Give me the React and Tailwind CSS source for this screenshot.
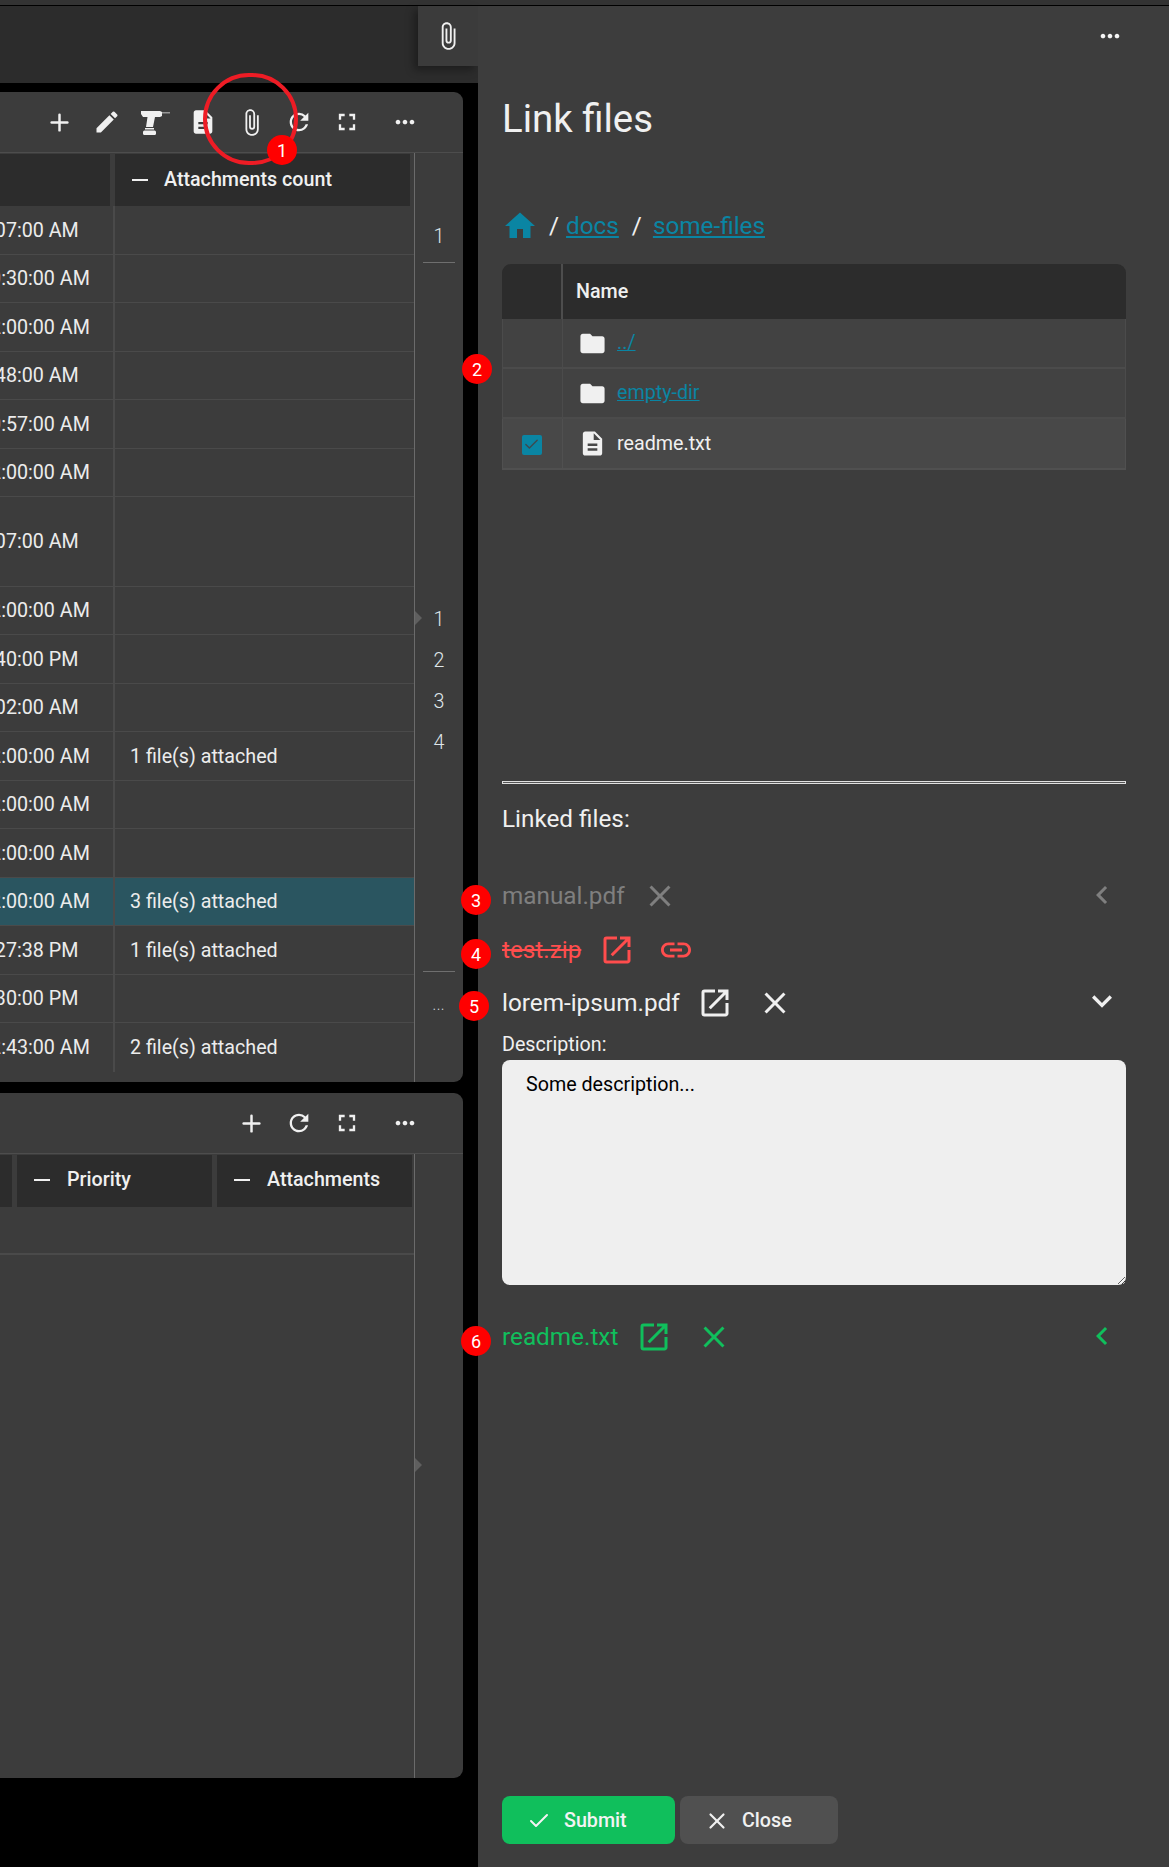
import { Check, Plus, X } from "lucide-react"
import {
  MdAttachFile,
  MdChevronLeft,
  MdClose,
  MdDescription,
  MdEdit,
  MdExpandMore,
  MdFolder,
  MdFullscreen,
  MdHome,
  MdLink,
  MdMoreHoriz,
  MdOpenInNew,
  MdRefresh,
} from "react-icons/md"

const rows = [
  { time: "9:07:00 AM" },
  { time: "10:30:00 AM" },
  { time: "12:00:00 AM" },
  { time: "9:48:00 AM" },
  { time: "10:57:00 AM" },
  { time: "12:00:00 AM" },
  { time: "9:07:00 AM", tall: true },
  { time: "12:00:00 AM" },
  { time: "3:40:00 PM" },
  { time: "9:02:00 AM" },
  { time: "12:00:00 AM", files: "1 file(s) attached" },
  { time: "12:00:00 AM" },
  { time: "12:00:00 AM" },
  { time: "12:00:00 AM", files: "3 file(s) attached", active: true },
  { time: "1:27:38 PM", files: "1 file(s) attached" },
  { time: "4:30:00 PM" },
  { time: "12:43:00 AM", files: "2 file(s) attached" },
]

function DrillIcon() {
  return (
    <svg width="30" height="25" viewBox="0 0 30 25" fill="#f0f0f0">
      <path d="M1 1h19l2 1v4l-2 1h-5l-2 10H6l1.500-10H3L1 4z" />
      <path d="M22 2.500h8v.8h-8z" />
      <rect x="5" y="18" width="9" height="1.500" />
      <rect x="3" y="20.500" width="13" height="4.500" rx="1.500" />
    </svg>
  )
}

function Tool({ children }) {
  return <div className="w-12 h-7 flex items-center justify-center text-[#f0f0f0]">{children}</div>
}

function Toolbar({ children }) {
  return (
    <div className="h-[61px] shrink-0 border-b border-[#4d4d4d] flex items-center justify-end pr-[34px]">
      {children}
      <div className="w-[10px]" />
      <div className="w-[48px] flex justify-center text-[#f0f0f0]">
        <MdMoreHoriz size={28} />
      </div>
    </div>
  )
}

function HeaderCell({ label, className }) {
  return (
    <div className={`h-[52px] bg-[#2c2c2c] flex items-center text-[19.7px] font-medium text-[#f0f0f0] ${className}`}>
      <span className="w-4 h-[2px] bg-[#f0f0f0]" />
      {label}
    </div>
  )
}

function Tick({ className }) {
  return <span className={`absolute left-0 w-0 h-0 border-y-[7px] border-y-transparent border-l-[7px] border-l-[#5f5f5f] ${className}`} />
}

function RailNumber({ children }) {
  return <div className="h-[41px] flex items-center justify-center text-[19.7px] font-light text-[#dfe6ea]">{children}</div>
}

function RecordsPanel() {
  return (
    <div className="h-[990px] shrink-0 bg-[#3c3c3c] rounded-r-[9px] flex flex-col overflow-hidden">
      <Toolbar>
        <Tool><Plus size={27} strokeWidth={2.2} /></Tool>
        <Tool><MdEdit size={28} /></Tool>
        <Tool><DrillIcon /></Tool>
        <Tool><MdDescription size={28} /></Tool>
        <Tool><MdAttachFile size={29} /></Tool>
        <Tool><MdRefresh size={28} /></Tool>
        <Tool><MdFullscreen size={28} /></Tool>
      </Toolbar>
      <div className="flex-1 flex min-h-0">
        <div className="w-[414px] shrink-0 pt-[1px]">
          <div className="flex">
            <HeaderCell label="" className="w-[110px] mr-[5px] [&>span]:hidden" />
            <HeaderCell label="Attachments count" className="w-[295px] pl-[17px] pb-[1px] gap-[16px]" />
          </div>
          {rows.map((row, i) => (
            <div
              key={i}
              className={`flex border-b-[1.5px] border-[#4a4a4a] text-[19.7px] text-[#ececec] last:border-b-0 ${row.tall ? "h-[89.5px]" : "h-[48.5px]"} ${row.active ? "bg-[#2a5560]" : ""}`}
            >
              <div className="w-[115px] shrink-0 border-r-2 border-[#4a4a4a] overflow-hidden flex items-center pt-[2px]">
                <span className="whitespace-nowrap ml-[-21px]">{row.time}</span>
              </div>
              <div className="flex-1 pl-[15px] flex items-center pt-[2px]">{row.files}</div>
            </div>
          ))}
        </div>
        <div className="relative flex-1 border-l border-[#6b6b6b] flex flex-col">
          <div className="h-[63px]" />
          <RailNumber>1</RailNumber>
          <div className="h-[6px] mx-[8px] border-b border-[#6f6f6f]" />
          <div className="h-[336px]" />
          <Tick className="top-[458px]" />
          <RailNumber>1</RailNumber>
          <RailNumber>2</RailNumber>
          <RailNumber>3</RailNumber>
          <RailNumber>4</RailNumber>
          <div className="h-[209px] mx-[8px] border-b border-[#6f6f6f]" />
          <div className="h-[70px] flex items-center justify-center text-[12px] tracking-[1px] text-[#cfd5d8] pb-[2px]">...</div>
        </div>
      </div>
    </div>
  )
}

function SubPanel() {
  return (
    <div className="h-[685px] shrink-0 mt-[11px] bg-[#3c3c3c] rounded-r-[9px] flex flex-col overflow-hidden">
      <Toolbar>
        <Tool><Plus size={27} strokeWidth={2.2} /></Tool>
        <Tool><MdRefresh size={28} /></Tool>
        <Tool><MdFullscreen size={28} /></Tool>
      </Toolbar>
      <div className="flex-1 flex min-h-0">
        <div className="w-[414px] shrink-0 pt-[1px]">
          <div className="flex">
            <div className="w-[12px] h-[52px] bg-[#2c2c2c] mr-[5px]" />
            <HeaderCell label="Priority" className="w-[195px] pl-[17px] mr-[5px] pb-[2px] gap-[17px]" />
            <HeaderCell label="Attachments" className="w-[195px] pl-[17px] pb-[2px] gap-[17px]" />
          </div>
          <div className="h-[48px] border-b-2 border-[#4a4a4a]" />
        </div>
        <div className="relative flex-1 border-l border-[#6b6b6b]">
          <Tick className="top-[304px]" />
        </div>
      </div>
    </div>
  )
}

function FileRow({ name, color, strike, className, children, chevron }) {
  return (
    <div className={`flex items-center ${color} ${className}`}>
      <span className={`text-[24.3px] leading-[30px] ${strike ? "line-through" : ""}`}>{name}</span>
      {children}
      {chevron}
    </div>
  )
}

function LinkFilesPanel() {
  return (
    <div className="flex-1 bg-[#3d3d3d] flex flex-col pl-[24px] pr-[43px] pb-[23px] text-[#f0f0f0]">
      <div className="h-[60px] flex items-center justify-end text-[#f5f5f5] mr-[2px]">
        <MdMoreHoriz size={28} />
      </div>
      <h1 className="text-[38.4px] leading-[44px] mt-[31px] text-[#f0f0f0]">Link files</h1>

      <div className="flex items-center h-[36px] mt-[67px] text-[24.3px] text-[#f0f0f0]">
        <MdHome size={36} className="text-[#0a85a3]" />
        <span className="ml-[11px] mr-[7px]">/</span>
        <a className="text-[#0a85a3] underline">docs</a>
        <span className="ml-[13px] mr-[11px]">/</span>
        <a className="text-[#0a85a3] underline">some-files</a>
      </div>

      <div className="mt-[20px] text-[19.7px]">
        <div className="h-[55px] flex bg-[#2c2c2c] rounded-t-[9px] font-medium">
          <div className="w-[61px] border-r-2 border-[#4d4d4d]" />
          <div className="pl-[13px] flex items-center">Name</div>
        </div>
        <div className="h-[50px] flex bg-[#424242] border-x border-b-2 border-[#4b4b4b]">
          <div className="w-[60px] border-r border-[#4b4b4b]" />
          <div className="pl-[15px] flex items-center gap-[10px]">
            <MdFolder size={29} className="text-[#f0f0f0]" />
            <a className="text-[#0a85a3] underline">../</a>
          </div>
        </div>
        <div className="h-[50px] flex bg-[#424242] border-x border-b-2 border-[#4b4b4b]">
          <div className="w-[60px] border-r border-[#4b4b4b]" />
          <div className="pl-[15px] flex items-center gap-[10px]">
            <MdFolder size={29} className="text-[#f0f0f0]" />
            <a className="text-[#0a85a3] underline">empty-dir</a>
          </div>
        </div>
        <div className="h-[51px] flex bg-[#484848] border-x border-b-2 border-[#505050]">
          <div className="w-[60px] border-r border-[#505050] flex items-center justify-center">
            <div className="w-5 h-5 mt-[2px] -ml-[2px] rounded-[2px] bg-[#0a85a3] flex items-center justify-center">
              <Check size={17} strokeWidth={2} className="text-[#3d4a50]" />
            </div>
          </div>
          <div className="pl-[15px] flex items-center gap-[10px]">
            <MdDescription size={29} className="text-[#f0f0f0]" />
            <span>readme.txt</span>
          </div>
        </div>
      </div>

      <hr className="mt-[311px] h-[3px] border border-[#e0e0e0] bg-[#555555]" />

      <div className="mt-[20px] text-[24.3px] leading-[30px]">Linked files:</div>

      <FileRow
        name="manual.pdf"
        color="text-[#7f7f7f]"
        className="mt-[44px]"
        chevron={<MdChevronLeft size={36} className="ml-auto mr-[6px] -mt-[3px]" />}
      >
        <MdClose size={36} className="ml-[17px]" />
      </FileRow>

      <FileRow name="test.zip" strike color="text-[#ff4d4d]" className="mt-[18px]">
        <MdOpenInNew size={36} className="ml-[18px]" />
        <MdLink size={36} className="ml-[23px]" />
      </FileRow>

      <FileRow
        name="lorem-ipsum.pdf"
        color="text-[#f0f0f0]"
        className="mt-[16px]"
        chevron={<MdExpandMore size={40} className="ml-auto mr-[4px] -mt-[3px]" />}
      >
        <MdOpenInNew size={36} className="ml-[17px]" />
        <MdClose size={36} className="ml-[24px]" />
      </FileRow>

      <div className="mt-[12px] text-[19.7px] leading-[24px]">Description:</div>
      <textarea
        className="mt-[3px] w-full h-[225px] block rounded-[8px] bg-[#efefef] text-black text-[19.7px] leading-[24px] px-[24px] pt-[13px] pb-[12px] outline-none"
        defaultValue="Some description..."
      />

      <FileRow
        name="readme.txt"
        color="text-[#10bf5c]"
        className="mt-[34px]"
        chevron={<MdChevronLeft size={36} className="ml-auto mr-[6px] -mt-[3px]" />}
      >
        <MdOpenInNew size={36} className="ml-[18px]" />
        <MdClose size={36} className="ml-[24px]" />
      </FileRow>

      <div className="mt-auto flex gap-[5px] text-[19.7px] font-medium">
        <button className="w-[173px] h-[48px] pt-[2px] rounded-[8px] bg-[#10bf5c] flex items-center pl-[25px] gap-[13px] text-[#f3f3f3]">
          <Check size={24} strokeWidth={2} />
          Submit
        </button>
        <button className="w-[158px] h-[48px] pt-[2px] rounded-[8px] bg-[#505050] flex items-center pl-[24px] gap-[12px] text-[#f0f0f0]">
          <X size={26} strokeWidth={2} />
          Close
        </button>
      </div>
    </div>
  )
}

function Badge({ n, className }) {
  return (
    <div className={`absolute w-[30px] h-[30px] rounded-full bg-[#ff0000] text-white text-[18px] flex items-center justify-center ${className}`}>
      {n}
    </div>
  )
}

export default function App() {
  return (
    <div className="relative w-[1169px] h-[1867px] overflow-hidden bg-black flex flex-col font-['Roboto',sans-serif]">
      <div className="h-[6px] shrink-0 bg-[#333333] border-b border-black" />
      <div className="flex-1 flex min-h-0">
        <div className="w-[478px] shrink-0 flex flex-col">
          <div className="h-[77px] shrink-0 bg-[#2c2c2c] flex justify-end items-start">
            <div className="w-[60px] h-[60px] bg-[#3b3b3b] shadow-[-4px_4px_8px_rgba(0,0,0,0.35)] flex items-center justify-center text-[#f0f0f0]">
              <MdAttachFile size={30} />
            </div>
          </div>
          <div className="flex-1 pt-[9px] pr-[15px] flex flex-col min-h-0">
            <RecordsPanel />
            <SubPanel />
          </div>
        </div>
        <LinkFilesPanel />
      </div>

      {/* annotations on top of the screenshot */}
      <div className="absolute left-[203px] top-[73px] w-[95px] h-[92px] rounded-full border-4 border-[#ee1c25]" />
      <Badge n="1" className="left-[267px] top-[135px]" />
      <Badge n="2" className="left-[462px] top-[354px]" />
      <Badge n="3" className="left-[461px] top-[885px]" />
      <Badge n="4" className="left-[461px] top-[939px]" />
      <Badge n="5" className="left-[459px] top-[991px]" />
      <Badge n="6" className="left-[461px] top-[1326px]" />
    </div>
  )
}
